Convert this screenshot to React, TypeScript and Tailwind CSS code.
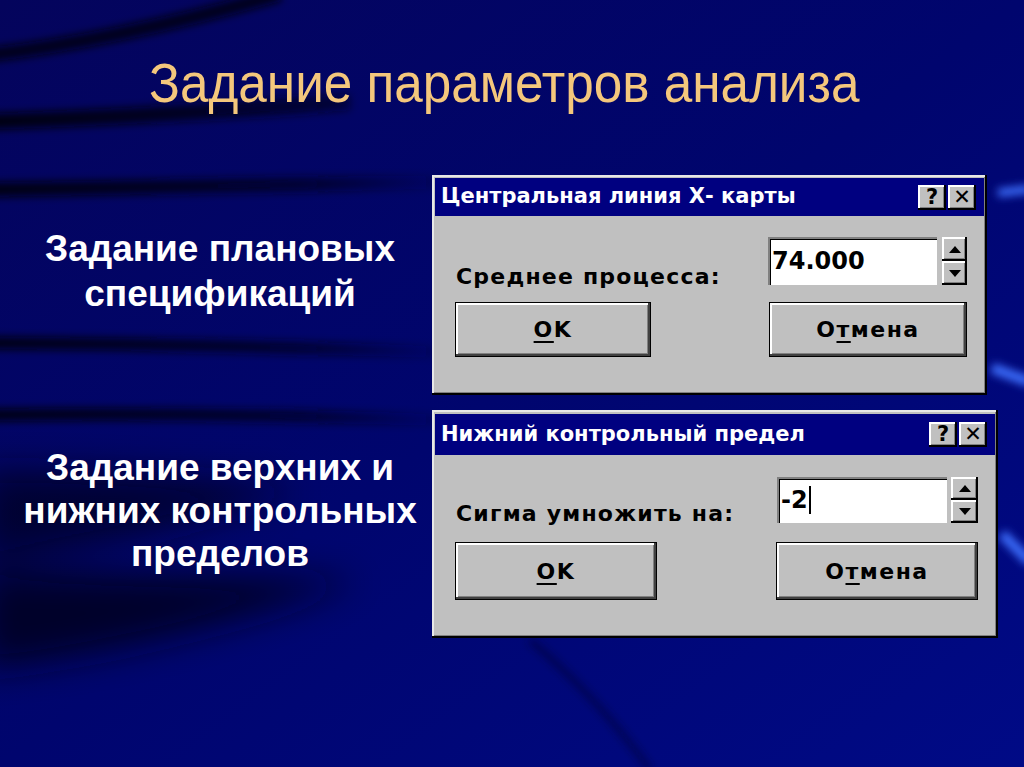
import React from "react";

const sys = "font-['DejaVu_Sans',sans-serif]";

function Backdrop() {
  return (
    <svg
      className="absolute inset-0 h-full w-full"
      viewBox="0 0 1024 767"
      preserveAspectRatio="none"
    >
      <defs>
        <linearGradient id="bg" x1="0" y1="0" x2="1" y2="1">
          <stop offset="0" stopColor="#04045c" />
          <stop offset="0.5" stopColor="#00056e" />
          <stop offset="1" stopColor="#000a86" />
        </linearGradient>
        <linearGradient id="fade" gradientUnits="userSpaceOnUse" x1="0" y1="0" x2="460" y2="0">
          <stop offset="0" stopColor="#000010" stopOpacity="0.95" />
          <stop offset="0.65" stopColor="#000018" stopOpacity="0.7" />
          <stop offset="1" stopColor="#000020" stopOpacity="0" />
        </linearGradient>
        <filter id="soft" x="-20%" y="-200%" width="140%" height="500%">
          <feGaussianBlur stdDeviation="4" />
        </filter>
        <filter id="blur" x="-20%" y="-50%" width="140%" height="200%">
          <feGaussianBlur stdDeviation="18" />
        </filter>
      </defs>
      <rect width="1024" height="767" fill="url(#bg)" />
      <g filter="url(#soft)" fill="none">
        <path d="M -20 56 Q 120 40 280 -6" stroke="#000010" strokeOpacity="0.85" strokeWidth="14" />
        <path d="M -20 122 Q 160 116 350 102" stroke="url(#fade)" strokeWidth="16" />
        <path d="M -20 190 Q 200 186 440 182" stroke="url(#fade)" strokeWidth="14" />
        <path d="M -20 343 Q 200 344 440 352" stroke="url(#fade)" strokeWidth="12" />
        <path d="M -20 415 Q 200 412 440 420" stroke="url(#fade)" strokeWidth="12" />
        <path d="M 530 640 Q 600 700 650 770" stroke="#000030" strokeOpacity="0.6" strokeWidth="6" />
        <path d="M 998 193 L 1030 189" stroke="#3e70ff" strokeWidth="8" />
        <path d="M 992 368 L 1030 382" stroke="#3e70ff" strokeWidth="10" />
        <path d="M 1002 534 L 1030 562" stroke="#3e70ff" strokeWidth="10" />
      </g>
      <g filter="url(#blur)">
        <path d="M -20 470 Q 150 470 300 490 Q 150 540 -20 560 Z" fill="#000018" fillOpacity="0.7" />
        <path d="M -20 570 L 360 580 Q 160 650 -20 670 Z" fill="#000018" fillOpacity="0.8" />
      </g>
    </svg>
  );
}

function TitleButton({ children }: { children: string }) {
  return (
    <div
      className={`flex h-[25px] w-[28px] items-center justify-center bg-[#c0c0c0] text-[21px] font-bold leading-none text-black shadow-[inset_-2px_-2px_#000,inset_2px_2px_#fff,inset_-3px_-3px_#808080] ${sys}`}
    >
      {children}
    </div>
  );
}

function Spinner({ className }: { className: string }) {
  const half =
    "flex flex-1 items-center justify-center bg-[#c0c0c0] shadow-[inset_-2px_-2px_#000,inset_2px_2px_#fff,inset_-3px_-3px_#808080]";
  return (
    <div className={`flex flex-col ${className}`}>
      <div className={half}>
        <svg width="12" height="7" viewBox="0 0 12 7">
          <path d="M6 0 L12 7 L0 7 Z" fill="#000" />
        </svg>
      </div>
      <div className={half}>
        <svg width="12" height="7" viewBox="0 0 12 7">
          <path d="M0 0 L12 0 L6 7 Z" fill="#000" />
        </svg>
      </div>
    </div>
  );
}

function PushButton({ className, children }: { className: string; children: React.ReactNode }) {
  return (
    <div
      className={`flex items-center justify-center border border-black bg-[#c0c0c0] text-[22px] font-bold tracking-[1.5px] text-black shadow-[inset_-2px_-2px_#404040,inset_2px_2px_#fff,inset_-3px_-3px_#808080] ${sys} ${className}`}
    >
      {children}
    </div>
  );
}

interface DialogProps {
  title: string;
  label: string;
  value: string;
  caret?: boolean;
  box: string;
  titleBar: string;
  row: string;
  labelTop: string;
  input: string;
  spinner: string;
  buttonsTop: string;
  okW: string;
  cancelW: string;
}

function Dialog({
  title,
  label,
  value,
  caret = false,
  box,
  titleBar,
  row,
  labelTop,
  input,
  spinner,
  buttonsTop,
  okW,
  cancelW,
}: DialogProps) {
  return (
    <div
      className={`flex flex-col bg-[#c0c0c0] p-[3px] shadow-[inset_-2px_-2px_#000,inset_2px_2px_#e8e8e8,inset_-3px_-3px_#808080] ${box}`}
    >
      <div className={`flex items-center bg-[#000080] pl-[6px] pr-[8px] ${titleBar}`}>
        <div className={`flex-1 text-[21px] font-bold text-white ${sys}`}>{title}</div>
        <div className="flex gap-[2px]">
          <TitleButton>?</TitleButton>
          <TitleButton>✕</TitleButton>
        </div>
      </div>
      <div className="flex flex-col pl-[20px] pr-[17px]">
        <div className={`flex items-start overflow-visible ${row}`}>
          <div
            className={`flex-1 pl-[1px] text-[22px] font-bold leading-[26px] tracking-[1.2px] text-black ${sys} ${labelTop}`}
          >
            {label}
          </div>
          <div
            className={`flex items-center bg-white pl-[4px] text-[24px] font-bold leading-none text-black shadow-[inset_2px_2px_#808080,inset_3px_3px_#000,inset_-2px_-2px_#fff] ${sys} ${input}`}
          >
            {value}
            {caret && <span className="ml-[1px] inline-block h-[28px] w-[2px] bg-black" />}
          </div>
          <Spinner className={spinner} />
        </div>
        <div className={`flex ${buttonsTop}`}>
          <PushButton className={okW}>
            <span>
              <u className="underline-offset-4">O</u>K
            </span>
          </PushButton>
          <div className="flex-1" />
          <PushButton className={cancelW}>
            <span>
              O<u className="underline-offset-4">т</u>мена
            </span>
          </PushButton>
        </div>
      </div>
    </div>
  );
}

export default function App() {
  return (
    <div className="relative h-[767px] w-[1024px] overflow-hidden bg-[#000670]">
      <Backdrop />
      <div className="relative flex flex-col">
        <div className="flex h-[175px] justify-center pr-[16px] pt-[55px]">
          <h1 className="inline-block scale-x-[0.915] text-[56px] font-normal leading-none text-[#f4c77c] font-['Liberation_Sans',Arial,sans-serif]">
            Задание параметров анализа
          </h1>
        </div>

        <div className="flex">
          <div className="w-[432px] pl-[8px] pt-[51px] text-center text-[37px] font-bold leading-[45px] text-white font-['Liberation_Sans',Arial,sans-serif]">
            Задание плановых
            <br />
            спецификаций
          </div>
          <Dialog
            title="Центральная линия Х- карты"
            label="Среднее процесса:"
            value="74.000"
            box="w-[555px] h-[220px]"
            titleBar="h-[38px]"
            row="mt-[21px] h-[48px]"
            labelTop="pt-[27px]"
            input="w-[169px] h-[48px] mr-[5px]"
            spinner="w-[25px] h-[48px]"
            buttonsTop="mt-[17px]"
            okW="w-[196px] h-[55px]"
            cancelW="w-[198px] h-[55px]"
          />
        </div>

        <div className="mt-[15px] flex">
          <div className="w-[432px] pl-[8px] pt-[36px] text-center text-[37px] font-bold leading-[43px] text-white font-['Liberation_Sans',Arial,sans-serif]">
            Задание верхних и
            <br />
            нижних контрольных
            <br />
            пределов
          </div>
          <Dialog
            title="Нижний контрольный предел"
            label="Сигма умножить на:"
            value="-2"
            caret
            box="w-[566px] h-[228px]"
            titleBar="h-[41px] mt-[1px]"
            row="mt-[22px] h-[46px]"
            labelTop="pt-[24px]"
            input="w-[170px] h-[46px] mr-[4px]"
            spinner="w-[27px] h-[46px]"
            buttonsTop="mt-[19px]"
            okW="w-[202px] h-[58px]"
            cancelW="w-[202px] h-[58px]"
          />
        </div>
      </div>
    </div>
  );
}
